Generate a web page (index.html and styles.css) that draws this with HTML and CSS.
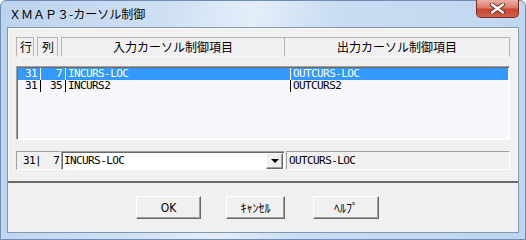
FILE: index.html
```html
<!DOCTYPE html>
<html lang="ja">
<head>
  <meta charset="UTF-8" />
  <title>XMAP3-カーソル制御</title>
  <link rel="stylesheet" href="styles.css">
</head>
<body>
  <div class="window">
    <div class="titlebar">
      <span class="title">ＸＭＡＰ３-カーソル制御</span>
      <div class="close">
        <svg width="17" height="11" viewBox="0 0 17 11">
          <path d="M3 1.5 L14 9.5 M14 1.5 L3 9.5" stroke="#6b2a22" stroke-width="4.2" stroke-linecap="round"/>
          <path d="M3 1.5 L14 9.5 M14 1.5 L3 9.5" stroke="#fff" stroke-width="2.4" stroke-linecap="round"/>
        </svg>
      </div>
    </div>

    <div class="client">
      <div class="panel">
        <div class="header">
          <div class="hcell h-row">行</div>
          <div class="hcell h-col">列</div>
          <div class="hcell h-in">入力カーソル制御項目</div>
          <div class="hcell h-out">出力カーソル制御項目</div>
        </div>

        <div class="list">
          <div class="item selected">
            <span class="c1">31</span><span class="c2">7</span><span class="c3">INCURS-LOC</span><span class="c4">OUTCURS-LOC</span>
          </div>
          <div class="item">
            <span class="c1">31</span><span class="c2">35</span><span class="c3">INCURS2</span><span class="c4">OUTCURS2</span>
          </div>
        </div>

        <div class="edit-row">
          <div class="pos"> 31|  7</div>
          <div class="combo">
            <span class="combo-text">INCURS-LOC</span>
            <span class="drop"><span class="arrow"></span></span>
          </div>
          <div class="out">OUTCURS-LOC</div>
        </div>
      </div>

      <div class="sep"></div>

      <div class="buttons">
        <button class="btn btn-ok">OK</button>
        <button class="btn btn-cancel">ｷｬﾝｾﾙ</button>
        <button class="btn btn-help">ﾍﾙﾌﾟ</button>
      </div>
    </div>
  </div>
</body>
</html>
```

FILE: styles.css
```css
body {
  margin: 0;
  background: #fff;
}

.window {
  width: 526px;
  height: 240px;
  box-sizing: border-box;
  border: 1px solid #6f8cb2;
  border-radius: 6px 6px 0 0;
  background: linear-gradient(100deg, #bcd3ee 0%, #cfe0f3 30%, #e4eef9 45%, #c9dcf2 60%, #bfd5ef 100%);
  font-family: "Noto Sans CJK JP", sans-serif;
}

.titlebar {
  height: 26px;
  display: flex;
  justify-content: space-between;
  align-items: flex-start;
}

.title {
  margin: 5px 0 0 8px;
  font-size: 12px;
  line-height: 16px;
  color: #000;
}

.close {
  width: 43px;
  height: 18px;
  box-sizing: border-box;
  margin: -1px 6px 0 0;
  border: 1px solid #7c2b22;
  border-top: none;
  border-radius: 0 0 5px 5px;
  background: linear-gradient(#eab0a6 0%, #dc7b69 45%, #c8462f 55%, #d0614a 100%);
  display: flex;
  align-items: center;
  justify-content: center;
}

.client {
  margin: 0 6px;
  height: 206px;
  box-sizing: border-box;
  border: 1px solid #8396b0;
  background: #f0f0f0;
}

.panel {
  height: 153px;
  box-sizing: border-box;
  padding: 8px 7px 0 7px;
  border: 1px solid #fafafa;
  border-bottom: none;
}

/* header cells */
.header {
  display: flex;
  height: 20px;
}

.hcell {
  box-sizing: border-box;
  height: 20px;
  border: 1px solid #b4b4b4;
  border-bottom-color: #f8f8f8;
  font-size: 12px;
  line-height: 18px;
  color: #000;
}

.h-row { width: 18px; padding-left: 3px; }
.h-col { width: 21px; padding-left: 4px; margin-left: 3px; }
.h-in { width: 224px; margin-left: 3px; text-align: center; }
.h-out { width: 225px; text-align: center; border-left: none; }

/* list */
.list {
  margin-top: 9px;
  height: 74px;
  box-sizing: border-box;
  padding: 1px 1px 0 1px;
  border: 1px solid #a0a0a0;
  border-right-color: #fff;
  border-bottom-color: #fff;
  box-shadow: inset 1px 1px #696969;
  background: #f6f6fb;
}

.item {
  display: flex;
  height: 12px;
  line-height: 12px;
  font-family: "DejaVu Sans Mono", monospace;
  font-size: 11px;
  letter-spacing: -0.6px;
  color: #000;
  white-space: pre;
}

.item.selected {
  background: #3399ff;
  color: #fff;
}

.item span {
  box-sizing: border-box;
}

.c1 {
  width: 23px;
  padding-right: 3px;
  text-align: right;
  border-right: 1px solid currentColor;
}

.c2 {
  width: 25px;
  padding-right: 3px;
  text-align: right;
  border-right: 1px solid currentColor;
}

.c3 {
  width: 225px;
  padding-left: 2px;
  border-right: 1px solid currentColor;
}

.c4 {
  padding-left: 2px;
}

/* edit row */
.edit-row {
  display: flex;
  margin-top: 11px;
  height: 19px;
  font-family: "DejaVu Sans Mono", monospace;
  font-size: 11px;
  letter-spacing: -0.6px;
  color: #000;
}

.pos {
  width: 45px;
  box-sizing: border-box;
  border: 1px solid #a0a0a0;
  border-right-color: #fff;
  border-bottom-color: #fff;
  line-height: 17px;
  white-space: pre;
}

.combo {
  width: 224px;
  box-sizing: border-box;
  display: flex;
  justify-content: space-between;
  border: 1px solid #a0a0a0;
  border-right-color: #fff;
  border-bottom-color: #fff;
  box-shadow: inset 1px 1px #696969;
  background: #fff;
  padding: 1px 1px 0 2px;
}

.combo-text {
  line-height: 16px;
}

.drop {
  width: 17px;
  height: 16px;
  box-sizing: border-box;
  border: 1px solid #fff;
  border-right-color: #696969;
  border-bottom-color: #696969;
  box-shadow: inset -1px -1px #a0a0a0;
  background: #f0f0f0;
  display: flex;
  align-items: center;
  justify-content: center;
}

.arrow {
  width: 0;
  height: 0;
  border-left: 4px solid transparent;
  border-right: 4px solid transparent;
  border-top: 4px solid #000;
}

.out {
  flex: 1;
  margin-left: 1px;
  box-sizing: border-box;
  border: 1px solid #a0a0a0;
  border-right-color: #fff;
  border-bottom-color: #fff;
  padding-left: 2px;
  line-height: 17px;
}

.sep {
  height: 2px;
  background: #6a6a6a;
}

/* buttons */
.buttons {
  display: flex;
  height: 49px;
  box-sizing: border-box;
  padding: 13px 0 0 128px;
}

.btn {
  height: 23px;
  box-sizing: border-box;
  border: 1px solid #fff;
  border-right-color: #696969;
  border-bottom-color: #696969;
  box-shadow: inset -1px -1px #a0a0a0;
  background: #f0f0f0;
  font-family: "DejaVu Sans Condensed", "Noto Sans CJK JP", sans-serif;
  font-size: 12px;
  color: #000;
  padding: 0;
}

.btn-ok { width: 65px; }
.btn-cancel { width: 59px; margin-left: 25px; }
.btn-help { width: 66px; margin-left: 28px; }
```
